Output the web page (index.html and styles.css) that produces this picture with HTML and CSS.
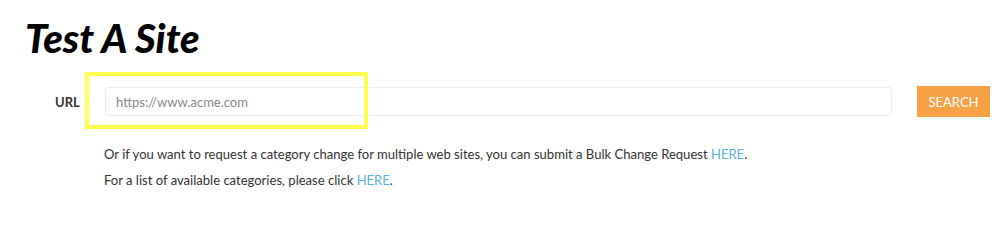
FILE: index.html
```html
<!DOCTYPE html>
<html>
<head>
<meta charset="utf-8">
<link rel="stylesheet" href="styles.css">
</head>
<body>
<div class="page">
  <h1 class="title">Test A Site</h1>
  <form class="search-row">
    <label class="url-label" for="url">URL</label>
    <div class="input-wrap">
      <input id="url" class="url-input" type="text" placeholder="https://www.acme.com">
      <div class="highlight"></div>
    </div>
    <button type="button" class="search-btn">SEARCH</button>
  </form>
  <div class="notes">
    <p>Or if you want to request a category change for multiple web sites, you can submit a Bulk Change Request <a href="#">HERE</a>.</p>
    <p>For a list of available categories, please click <a href="#">HERE</a>.</p>
  </div>
</div>
</body>
</html>
```
FILE: styles.css
```css
* { box-sizing: border-box; }
html, body { margin: 0; padding: 0; background: #fff; }
body { font-family: Lato, "Open Sans", sans-serif; color: #333; }
.page { padding: 14px 8px 0 25px; }
.title {
  margin: 0;
  font-size: 40px;
  font-weight: 900;
  font-style: italic;
  color: #000;
  line-height: 48px;
}
.search-row {
  display: flex;
  align-items: center;
  margin-top: 24px;
  margin-left: 30px;
}
.url-label {
  font-size: 13px;
  font-weight: 700;
  color: #333;
  width: 50px;
}
.input-wrap { position: relative; }
.url-input {
  display: block;
  width: 787px;
  height: 29px;
  border: 1px solid #ececec;
  border-radius: 3px;
  padding: 0 10px;
  font-family: Lato, sans-serif;
  font-size: 13px;
  color: #555;
  outline: none;
}
.url-input::placeholder { color: #888; }
.highlight {
  position: absolute;
  left: -20px;
  top: -15px;
  width: 283px;
  height: 57px;
  border: 4px solid #ffff4d;
  pointer-events: none;
}
.search-btn {
  margin-left: 25px;
  width: 73px;
  height: 31px;
  border: 0;
  background: #f7a147;
  color: #fff;
  font-family: Lato, sans-serif;
  font-size: 13px;
  padding: 0;
}
.notes { margin-left: 79px; margin-top: 24px; font-size: 13.05px; color: #333; }
.notes p { margin: 0; line-height: 26px; }
.notes a { color: #5ab0d8; text-decoration: none; }
```
